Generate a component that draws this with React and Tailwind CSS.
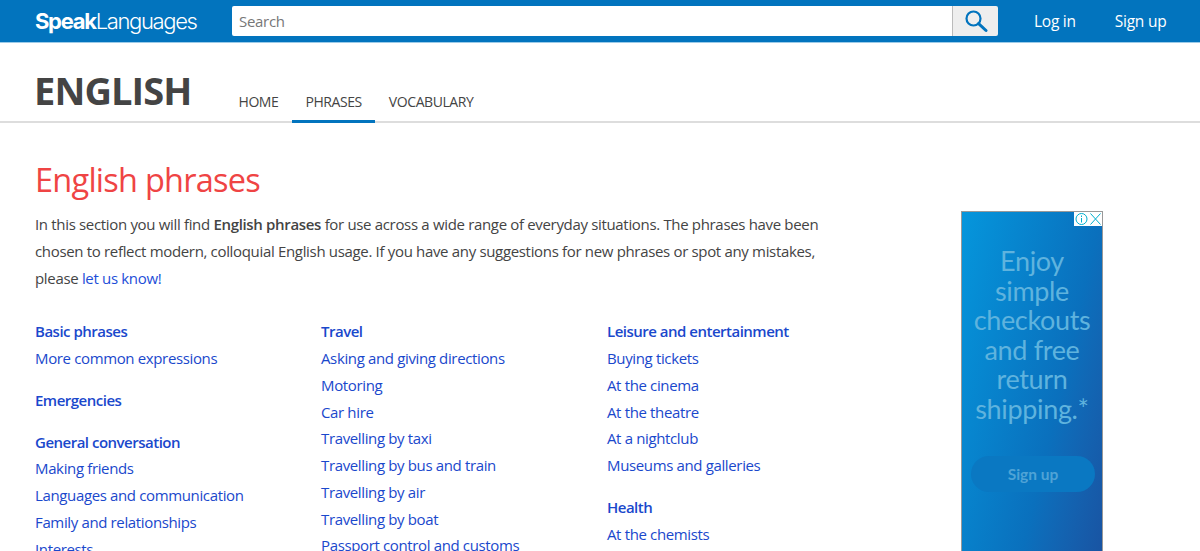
const F = { fontFamily: '"Open Sans", "Noto Sans", sans-serif' };

function Group({ title, items }) {
  return (
    <div className="mb-[15px]">
      <div className="h-[26.75px] leading-[26.75px] font-semibold tracking-[-0.5px]">{title}</div>
      {items.map((t) => (
        <div key={t} className="h-[26.75px] leading-[26.75px] tracking-[-0.36px]">{t}</div>
      ))}
    </div>
  );
}

function Tab({ children, active }) {
  return (
    <div className={"px-[13.5px] h-[39px] leading-[36px] text-[14px] font-medium tracking-[-0.42px] text-[#444] " + (active ? "border-b-[3px] border-[#0274be]" : "")}>
      {children}
    </div>
  );
}

export default function App() {
  return (
    <div className="h-[551px] overflow-hidden bg-white text-[15px] text-[#444]" style={F}>
      <header className="h-[43px] bg-[#0274be] border-b border-[#9ccbe8] flex items-center">
        <div className="pl-[35px] w-[232px] text-white text-[22px] leading-none" style={{ fontFamily: '"Inter", "Liberation Sans", sans-serif' }}>
          <span className="font-bold tracking-[-1.3px]">Speak</span><span className="font-light tracking-[-1.35px]">Languages</span>
        </div>
        <div className="w-[766px] h-[30px] flex rounded-[2px] overflow-hidden -mt-[1px]">
          <div className="w-[721px] bg-white border-r border-[#bbb] pl-[7px] leading-[30px] text-[#777] text-[15px] tracking-[-0.3px]">Search</div>
          <div className="flex-1 bg-[#eee] flex items-center justify-center">
            <svg width="24" height="24" viewBox="0 0 24 24" fill="none" stroke="#0274be" strokeWidth="2.2">
              <circle cx="9.5" cy="9.5" r="7" />
              <path d="M14.6 14.6 L22 21.5" strokeLinecap="round" strokeWidth="3" />
            </svg>
          </div>
        </div>
        <div className="ml-[36px] pt-[1px] text-white text-[15.5px] tracking-[-0.25px]">Log in</div>
        <div className="ml-[39px] pt-[1px] text-white text-[15.5px] tracking-[-0.25px]">Sign up</div>
      </header>

      <div className="h-[80px] border-b-2 border-[#ddd] flex items-end pl-[35px]">
        <div className="w-[190px] -ml-[1px] mr-[1px] text-[38px] font-bold text-[#444] leading-none pb-[12px] tracking-[-0.9px]">ENGLISH</div>
        <div className="flex -mb-[2px]">
          <Tab>HOME</Tab>
          <Tab active>PHRASES</Tab>
          <Tab>VOCABULARY</Tab>
        </div>
      </div>

      <main className="flex pl-[35px]">
        <div className="w-[926px]">
          <h1 className="mt-[33px] text-[32.5px] leading-[48px] text-[#ef4444] font-normal tracking-[-0.75px]">English phrases</h1>
          <p className="mt-[7px] w-[800px] leading-[26.75px] tracking-[-0.33px]">
            In this section you will find <b className="font-semibold">English phrases</b> for use across a wide range of everyday situations. The phrases have been chosen to reflect modern, colloquial English usage. If you have any suggestions for new phrases or spot any mistakes, please <span className="text-[#1d4ed8]">let us know!</span>
          </p>
          <div className="mt-[27px] flex text-[#1a48cc]">
            <div className="w-[286px]">
              <Group title="Basic phrases" items={["More common expressions"]} />
              <Group title="Emergencies" items={[]} />
              <Group title="General conversation" items={["Making friends", "Languages and communication", "Family and relationships", "Interests"]} />
            </div>
            <div className="w-[286px]">
              <Group title="Travel" items={["Asking and giving directions", "Motoring", "Car hire", "Travelling by taxi", "Travelling by bus and train", "Travelling by air", "Travelling by boat", "Passport control and customs"]} />
            </div>
            <div className="w-[286px]">
              <Group title="Leisure and entertainment" items={["Buying tickets", "At the cinema", "At the theatre", "At a nightclub", "Museums and galleries"]} />
              <Group title="Health" items={["At the chemists"]} />
            </div>
          </div>
        </div>
        <aside className="relative mt-[88px] w-[142px] h-[600px] shrink-0 border-t border-x border-[#999] bg-gradient-to-br from-[#0596dc] via-[#0a70bd] to-[#1c3f8f] text-center text-[#5fb3de]">
          <div className="absolute top-0 right-0 flex bg-white h-[14px]">
            <svg width="15" height="14" viewBox="0 0 15 14" fill="none" stroke="#00aecd" strokeWidth="1"><circle cx="7.5" cy="7" r="5.5" /><path d="M7.5 6v4.5M7.5 3.5v1.5" /></svg>
            <svg width="13" height="14" viewBox="0 0 13 14" fill="none" stroke="#00aecd" strokeWidth="1"><path d="M1.5 1.5l10 11M11.5 1.5l-10 11" /></svg>
          </div>
          <div className="pt-[34px] text-[27px] leading-[29.6px] tracking-[-0.35px]" style={{ fontFamily: '"Lato", sans-serif' }}>
            Enjoy<br />simple<br />checkouts<br />and free<br />return<br />shipping.*
          </div>
          <div className="ml-[9px] mr-[7px] mt-[32px] h-[36px] rounded-full bg-[#0a78c2] text-[#4fa3d6] font-bold text-[15.5px] leading-[36px]" style={{ fontFamily: '"Lato", sans-serif' }}>Sign up</div>
        </aside>
      </main>
    </div>
  );
}
